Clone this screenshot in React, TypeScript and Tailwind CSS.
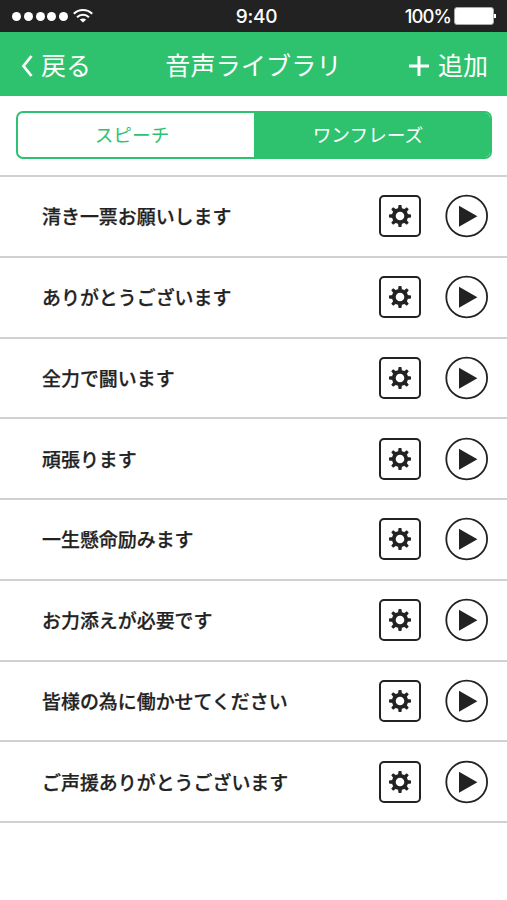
import { useState } from 'react';

const phrases = [
  '清き一票お願いします',
  'ありがとうございます',
  '全力で闘います',
  '頑張ります',
  '一生懸命励みます',
  'お力添えが必要です',
  '皆様の為に働かせてください',
  'ご声援ありがとうございます',
];

const tabs = ['スピーチ', 'ワンフレーズ'];

function GearIcon() {
  return (
    <svg width="22" height="22" viewBox="-11 -11 22 22">
      <circle r="6.2" fill="none" stroke="#222" strokeWidth="3.8" />
      {[0, 45, 90, 135, 180, 225, 270, 315].map(a => (
        <path key={a} d="M-2 -7.2L-1.4 -11H1.4L2 -7.2Z" fill="#222" transform={`rotate(${a})`} />
      ))}
    </svg>
  );
}

function PlayIcon() {
  return (
    <svg width="44" height="44" viewBox="0 0 44 44">
      <circle cx="21.7" cy="22" r="20.4" fill="none" stroke="#222" strokeWidth="1.8" />
      <path d="M14 11.8V32.8L32.4 22.3Z" fill="#222" />
    </svg>
  );
}

function StatusBar() {
  return (
    <div className="grid h-8 grid-cols-3 items-center bg-[#222] pl-3 pr-[11px] text-white">
      <div className="flex items-center">
        <div className="flex gap-[2.8px]">
          {[0, 1, 2, 3, 4].map(i => <span key={i} className="size-[9px] rounded-full bg-white" />)}
        </div>
        <svg className="ml-[5px]" width="20" height="14" viewBox="0 0 20 14" fill="none" stroke="#fff" strokeWidth="2.1">
          <path d="M0.8 4.8C6 -0.2 14 -0.2 19.2 4.8" />
          <path d="M4 8.2C7.4 5 12.6 5 16 8.2" />
          <path d="M10 13.6L6.8 10.6C8.6 9 11.4 9 13.2 10.6Z" fill="#fff" stroke="none" />
        </svg>
      </div>
      <div className="pl-[5px] pt-0.5 text-center text-[19px] font-medium leading-[30px] tracking-[-0.2px]">9:40</div>
      <div className="flex items-center justify-end">
        <span className="text-[18.5px] font-medium leading-8 tracking-[-0.9px]">100%</span>
        <span className="ml-[3px] h-[18px] w-10 rounded-[3px] border border-[#aaa] bg-white" />
        <span className="h-1 w-0.5 bg-white" />
      </div>
    </div>
  );
}

export default function App() {
  const [tab, setTab] = useState(1);
  return (
    <main className="h-[900px] w-[507px] overflow-hidden bg-white font-['Inter','Noto_Sans_CJK_JP',sans-serif] text-[#222]">
      <StatusBar />
      <header className="grid h-16 grid-cols-[150px_1fr_150px] items-center bg-[#2fc26e] text-[25px] font-normal leading-none text-white">
        <button className="flex items-center pl-[21px] pt-[3px]">
          <svg width="12" height="22" viewBox="0 0 12 22" fill="none" stroke="#fff" strokeWidth="2.8">
            <path d="M10.5 1L2.5 11L10.5 21" />
          </svg>
          <span className="ml-2 pb-px pt-[3px]">戻る</span>
        </button>
        <h1 className="whitespace-nowrap pt-[5px] text-center tracking-[0.2px]">音声ライブラリ</h1>
        <button className="flex items-center justify-end pr-[19px] pt-[3px]">
          <svg width="20" height="20" viewBox="0 0 20 20" stroke="#fff" strokeWidth="3">
            <path d="M10 0V20M0 10H20" />
          </svg>
          <span className="ml-[9px] pb-px pt-[3px]">追加</span>
        </button>
      </header>
      <div className="pb-4 pl-4 pr-[15px] pt-[15px]">
        <div className="flex h-12 overflow-hidden rounded-[7px] border-2 border-[#2fc26e]">
          {tabs.map((t, i) => (
            <button
              key={t}
              onClick={() => setTab(i)}
              className={`flex-1 pr-2 pt-0.5 text-[18.7px] font-normal leading-none ${tab === i ? 'bg-[#2fc26e] text-white' : 'text-[#2fc26e]'}`}
            >
              {t}
            </button>
          ))}
        </div>
      </div>
      <ul className="border-t-2 border-[#d0d0d0]">
        {phrases.map(p => (
          <li key={p} className="flex h-[80.75px] items-center border-b-2 border-[#d0d0d0] pl-[42px] pr-[18px]">
            <span className="flex-1 pt-[5px] text-[18.95px] font-medium leading-none [-webkit-text-stroke:0.25px_#222]">{p}</span>
            <button className="flex size-[42px] items-center justify-center rounded-[5px] border-2 border-[#222]">
              <GearIcon />
            </button>
            <button className="ml-6">
              <PlayIcon />
            </button>
          </li>
        ))}
      </ul>
    </main>
  );
}
